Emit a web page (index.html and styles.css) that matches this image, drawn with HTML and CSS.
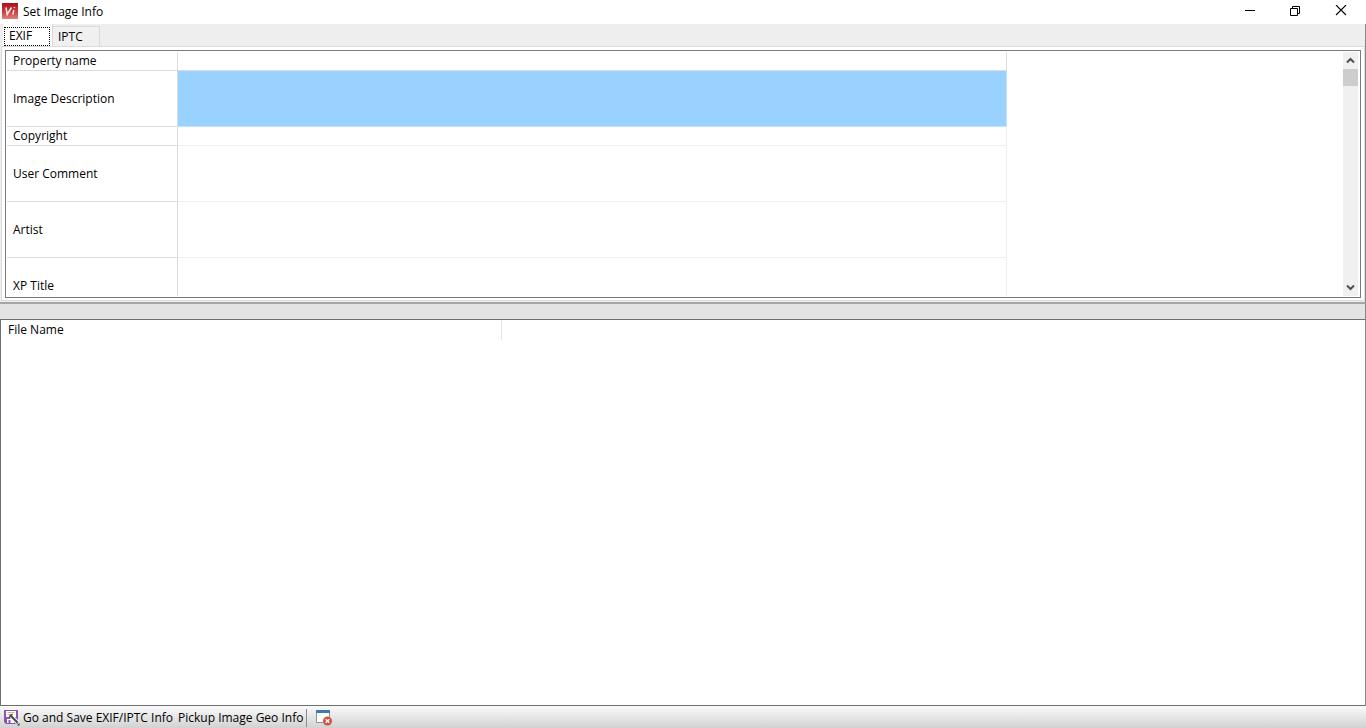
FILE: index.html
```html
<!DOCTYPE html>
<html lang="en">
<head>
<meta charset="utf-8">
<title>Set Image Info</title>
<link rel="stylesheet" href="styles.css">
</head>
<body>
<header class="titlebar">
  <svg class="app-icon" width="16" height="16" viewBox="0 0 16 16" aria-hidden="true">
    <defs><linearGradient id="red" x1="0" y1="0" x2="0" y2="1"><stop offset="0" stop-color="#a81218"/><stop offset=".5" stop-color="#c93a3a"/><stop offset="1" stop-color="#e0807c"/></linearGradient></defs>
    <rect width="16" height="16" fill="url(#red)"/>
    <path d="M4 4.500l1.200 7L9.500 4.500M11.800 7l-.9 4.600M12.500 4l-.2 1.200" fill="none" stroke="#fbe9e9" stroke-width="1.500"/>
  </svg>
  <h1 class="title">Set Image Info</h1>
  <div class="window-buttons">
    <button class="window-button" aria-label="Minimize"><svg width="12" height="12" viewBox="0 0 12 12"><path d="M2 5.500h10" stroke="#000"/></svg></button>
    <button class="window-button" aria-label="Restore"><svg width="12" height="12" viewBox="0 0 12 12"><path d="M1.500 3.500h7v7h-7zM3.500 3.500v-2h7v7h-2" fill="none" stroke="#000"/></svg></button>
    <button class="window-button" aria-label="Close"><svg width="12" height="12" viewBox="0 0 12 12"><path d="M1 0l10 10M11 0L1 10" stroke="#000" stroke-width="1.100"/></svg></button>
  </div>
</header>
<main class="content">
  <section class="info">
    <div class="tabs" role="tablist">
      <button class="tab tab-active" role="tab" aria-selected="true"><span class="tab-focus">EXIF</span></button>
      <button class="tab" role="tab" aria-selected="false">IPTC</button>
    </div>
    <div class="panel" role="tabpanel">
      <div class="grid-frame">
        <div class="grid-view">
          <table class="grid">
            <thead><tr><th>Property name</th><th></th></tr></thead>
            <tbody>
              <tr class="tall selected"><td>Image Description</td><td></td></tr>
              <tr class="short"><td>Copyright</td><td></td></tr>
              <tr class="tall"><td>User Comment</td><td></td></tr>
              <tr class="tall"><td>Artist</td><td></td></tr>
              <tr class="tall"><td>XP Title</td><td></td></tr>
            </tbody>
          </table>
        </div>
        <div class="scrollbar">
          <button class="scroll-button" aria-label="Scroll up"><svg width="9" height="7" viewBox="0 0 9 7"><path d="M1 5.500L4.500 2L8 5.500" fill="none" stroke="#505050" stroke-width="2"/></svg></button>
          <div class="thumb"></div>
          <button class="scroll-button scroll-down" aria-label="Scroll down"><svg width="9" height="7" viewBox="0 0 9 7"><path d="M1 1.500L4.500 5L8 1.500" fill="none" stroke="#505050" stroke-width="2"/></svg></button>
        </div>
      </div>
    </div>
  </section>
  <div class="splitter"></div>
  <section class="files">
    <table class="file-table"><thead><tr><th>File Name</th></tr></thead></table>
  </section>
</main>
<footer class="toolbar">
  <button class="tool">
    <svg width="16" height="16" viewBox="0 0 16 16" aria-hidden="true">
      <path d="M0 0h14v14H2L0 12z" fill="#8a55b0"/>
      <path d="M2 1h10v6H2z" fill="#fff"/>
      <path d="M3.500 2.500h7M3.500 4.500h5" stroke="#d9b27c"/>
      <path d="M3 9h7v4H3z" fill="#fff"/><path d="M4.500 10h2v3h-2z" fill="#8a55b0"/>
      <path d="M7 6l6.500 6.500" stroke="#fff" stroke-width="4"/>
      <path d="M6 5l7.500 7.500" stroke="#4a4a55" stroke-width="2.200"/>
      <path d="M8.500 4L5 7.500" stroke="#4a4a55" stroke-width="1.400"/>
      <path d="M13 15.500h2.500V13z" fill="#333"/>
    </svg>
    <span>Go and Save EXIF/IPTC Info</span>
  </button>
  <button class="tool">Pickup Image Geo Info</button>
  <span class="separator"></span>
  <button class="tool" aria-label="Close window">
    <svg width="16" height="16" viewBox="0 0 16 16" aria-hidden="true">
      <path d="M.5 .5h13v12H.5z" fill="#fff" stroke="#8b949e"/>
      <path d="M0 0h14v3H0z" fill="#3e78b5"/>
      <circle cx="11.500" cy="11" r="4.500" fill="#d4513f"/>
      <path d="M9.700 9.200l3.600 3.600M13.300 9.200l-3.600 3.600" stroke="#fff" stroke-width="1.400"/>
    </svg>
  </button>
</footer>
</body>
</html>
```
FILE: styles.css
```css
* { box-sizing: border-box; }

body {
  display: flex;
  flex-direction: column;
  height: 100vh;
  margin: 0;
  overflow: hidden;
  background: #fff;
  color: #000;
  font: 12px/16px "Open Sans", "Noto Sans", sans-serif;
}

button {
  padding: 0;
  border: 0;
  background: none;
  color: inherit;
  font: inherit;
}

svg { display: block; flex: none; }

.titlebar {
  display: flex;
  align-items: center;
  gap: 5px;
  height: 24px;
  padding: 0 2px 2px;
  flex: none;
}

.title {
  flex: 1;
  margin: 0;
  padding-top: 1px;
  font-size: 12px;
  font-weight: 400;
}

.window-buttons {
  display: flex;
  height: 22px;
}

.window-button {
  display: flex;
  align-items: center;
  justify-content: center;
  width: 46px;
}

.content {
  display: flex;
  flex-direction: column;
  flex: 1;
  min-height: 0;
  border-right: 1px solid #888;
}

.info {
  display: flex;
  flex-direction: column;
  flex: none;
  height: 278px;
  padding-left: 1px;
  background: #eee;
}

.tabs {
  display: flex;
  align-items: flex-end;
  height: 22px;
  padding-left: 2px;
}

.tab {
  height: 20px;
  padding: 1px 16px 0 5px;
  border: 1px solid #d9d9d9;
  border-left: 0;
  border-bottom: 0;
  background: #f0f0f0;
}

.tab-active {
  height: 22px;
  padding: 2px 2px 0 1px;
  border: 0;
  border-right: 1px solid #d9d9d9;
  background: #fff;
}

.tab-focus {
  display: block;
  width: 46px;
  height: 19px;
  padding-left: 4px;
  border: 1px dotted #000;
  text-align: left;
}

.panel {
  display: flex;
  flex: 1;
  min-height: 0;
  margin-bottom: 1px;
  padding: 3px 3px 2px;
  border: 1px solid #dcdcdc;
  background: #fff;
}

.grid-frame {
  display: flex;
  flex: 1;
  min-width: 0;
  padding: 1px;
  border: 1px solid #7a7a7a;
}

.grid-view { flex: 1; overflow: hidden; }

.grid {
  width: 1000px;
  table-layout: fixed;
  border-collapse: separate;
  border-spacing: 0;
}

.grid th, .grid td {
  height: 19px;
  padding: 0 6px;
  border-right: 1px solid #eee;
  border-bottom: 1px solid #eee;
  text-align: left;
  font-weight: 400;
}

.grid th:first-child { width: 171px; }
.grid th, .grid td:first-child { border-color: #dcdcdc; }
.grid .tall td { height: 56px; }
.grid .selected td:last-child { background: #99d1ff; border-color: #c4e2f8; }

.scrollbar {
  display: flex;
  flex-direction: column;
  width: 16px;
  border-right: 1px solid #fff;
  background: #f0f0f0;
}

.scroll-button {
  display: flex;
  align-items: center;
  justify-content: center;
  height: 17px;
}

.thumb { height: 17px; background: #cdcdcd; }
.scroll-down { margin-top: auto; }

.splitter {
  flex: none;
  height: 17px;
  border-top: 2px solid #a5a5a5;
  background: #e3e3e3;
}

.files {
  flex: 1;
  border: 1px solid #6e6e6e;
  border-right: 0;
  background: #fff;
}

.file-table {
  width: 501px;
  border-spacing: 0;
}

.file-table th {
  height: 20px;
  padding: 0 7px;
  border-right: 1px solid #e5e5e5;
  text-align: left;
  font-weight: 400;
}

.toolbar {
  display: flex;
  align-items: center;
  gap: 5px;
  flex: none;
  height: 22px;
  padding: 2px 4px 0;
  background: linear-gradient(#fafafa, #d2d2d2);
}

.tool {
  display: flex;
  align-items: center;
  gap: 3px;
}

.separator {
  width: 1px;
  height: 18px;
  margin: 0 4px 0 -2px;
  background: #8c8c8c;
}
```
